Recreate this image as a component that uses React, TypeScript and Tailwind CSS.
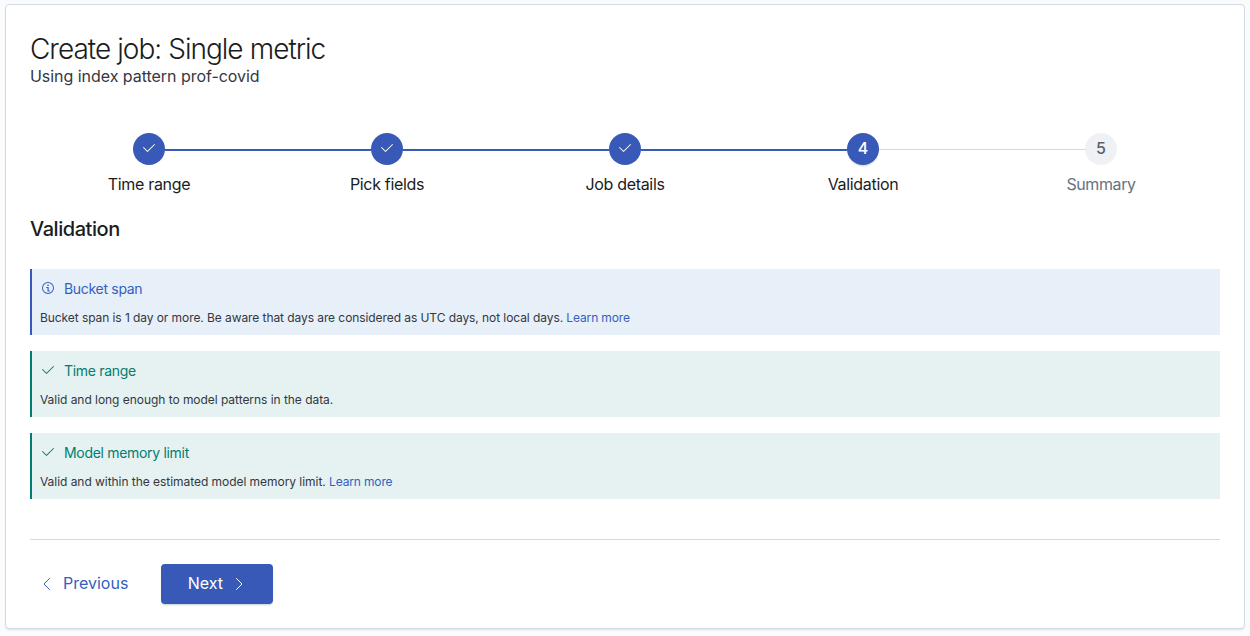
import type { ReactNode } from "react";

const Check = () => (
  <svg width="16" height="16" viewBox="0 0 16 16" fill="currentColor">
    <path d="M6.5 12a.502.502 0 01-.354-.146l-4-4a.502.502 0 01.708-.708L6.5 10.793l6.646-6.647a.502.502 0 01.708.708l-7 7A.502.502 0 016.5 12" fillRule="evenodd" />
  </svg>
);

const Info = () => (
  <svg width="16" height="16" viewBox="0 0 16 16" fill="currentColor">
    <path fillRule="evenodd" d="M7.5 11.508L7.468 8H6.25V7h2.401l.03 3.508H9.8v1H7.5zm-.25-6.202a.83.83 0 01.207-.577c.137-.153.334-.229.59-.229.256 0 .454.076.594.23.14.152.21.345.21.576 0 .228-.07.417-.21.568-.14.15-.338.226-.594.226-.256 0-.453-.075-.59-.226a.81.81 0 01-.207-.568zM8 13A5 5 0 108 3a5 5 0 000 10zm0 1A6 6 0 118 2a6 6 0 010 12z" />
  </svg>
);

const Chevron = ({ left = false }: { left?: boolean }) => (
  <svg width="16" height="16" viewBox="0 0 16 16" fill="none" stroke="currentColor" strokeWidth="1" strokeLinecap="round" strokeLinejoin="round">
    <path d={left ? "M10.5 2.5 5 8l5.5 5.5" : "M5.5 2.5 11 8l-5.5 5.5"} />
  </svg>
);

const steps = ["Time range", "Pick fields", "Job details", "Validation", "Summary"];

function Step({ index, title }: { index: number; title: string }) {
  const done = index < 3;
  const last = index === 4;
  return (
    <li className="flex flex-1 flex-col items-center">
      <div className="flex w-full items-center">
        <span className={`flex-1 ${index === 0 ? "" : last ? "mt-px h-px bg-[#d3dae6]" : "mt-0.5 h-0.5 bg-[#3859b8]"}`} />
        <span className={`flex size-8 items-center justify-center rounded-full pb-0.5 text-[16px] leading-6 font-medium ${last ? "bg-[#eff1f4] text-[#5c616d]" : "bg-[#3859b8] text-white"} ${index === 3 ? "shadow-[0_2px_2px_-1px_rgba(54,97,126,0.3)]" : ""}`}>
          {done ? <Check /> : index + 1}
        </span>
        <span className={`flex-1 ${last ? "" : index === 3 ? "mt-px h-px bg-[#d3dae6]" : "mt-0.5 h-0.5 bg-[#3859b8]"}`} />
      </div>
      <span className={`mt-[7px] text-[16px] leading-6 ${last ? "tracking-[-0.4px] text-[#69707d]" : "tracking-[-0.32px] text-[#1a1c21]"}`}>{title}</span>
    </li>
  );
}

function Callout({ info = false, title, children }: { info?: boolean; title: string; children: ReactNode }) {
  return (
    <section className={`h-[66px] border-l-2 p-2 ${info ? "border-[#3859b8] bg-[#e7eff8]" : "border-[#017d73] bg-[#e5f2f1]"}`}>
      <h3 className={`flex items-center gap-2 text-[14px] leading-6 tracking-[-0.31px] ${info ? "text-[#345fc0]" : "text-[#017d73]"}`}>
        <span className="pb-0.5">{info ? <Info /> : <Check />}</span>
        {title}
      </h3>
      <p className={`mt-2 text-[12px] leading-[18px] text-[#343741] ${info ? "tracking-[-0.075px]" : "tracking-[-0.045px]"}`}>{children}</p>
    </section>
  );
}

const Learn = () => <a href="#" className="tracking-[-0.14px] text-[#345fc0]">Learn more</a>;

export default function App() {
  return (
    <div className="h-[636px] bg-[#fafbfd] px-[5px] pt-1 font-['Inter',sans-serif]">
      <main className="h-[625px] rounded border border-[#d3dae6] bg-white px-6 pt-6 shadow-[0_2px_2px_-1px_rgba(152,162,179,0.3)]">
        <h1 className="text-[28px] leading-10 font-light tracking-[-1.02px] [word-spacing:0.35px] text-[#1a1c21]">Create job: Single metric</h1>
        <p className="-mt-[5px] text-[16px] leading-6 tracking-[-0.04px] text-[#343741]">Using index pattern prof-covid</p>
        <ol className="mt-[45px] flex">
          {steps.map((s, i) => <Step key={s} index={i} title={s} />)}
        </ol>
        <h2 className="mt-[17px] text-[20px] leading-8 font-medium tracking-[-0.44px] text-[#1a1c21]">Validation</h2>
        <div className="mt-6 flex flex-col gap-4">
          <Callout info title="Bucket span">Bucket span is 1 day or more. Be aware that days are considered as UTC days, not local days. <Learn /></Callout>
          <Callout title="Time range">Valid and long enough to model patterns in the data.</Callout>
          <Callout title="Model memory limit">Valid and within the estimated model memory limit. <Learn /></Callout>
        </div>
        <hr className="mt-10 border-[#d3dae6]" />
        <div className="mt-6 flex gap-5 text-[16px] leading-6">
          <button className="flex h-10 items-center gap-2 pr-[13px] pl-[9px] text-[#345fc0]"><Chevron left /><span className="pb-0.5">Previous</span></button>
          <button className="flex h-10 w-28 items-center justify-center gap-2 rounded bg-[#3859b8] text-white shadow-[0_2px_2px_-1px_rgba(54,97,126,0.3)]"><span className="pb-0.5">Next</span><Chevron /></button>
        </div>
      </main>
    </div>
  );
}
